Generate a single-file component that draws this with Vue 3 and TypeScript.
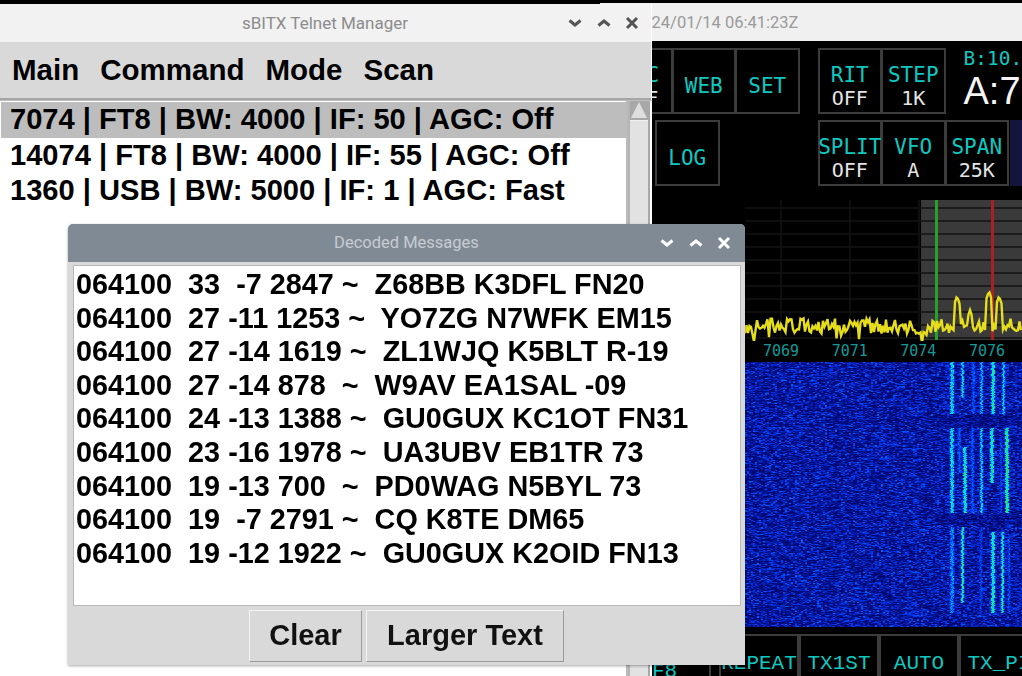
<template>
  <div class="desktop">
    <!-- radio app behind the two dialogs -->
    <section class="radio">
      <header class="radio-title">2024/01/14 06:41:23Z</header>
      <div class="radio-row row-one">
        <div class="btn-group">
          <div class="btn"><span class="lab">AGC</span><span class="val">OFF</span></div>
          <div class="btn"><span class="lab">WEB</span></div>
          <div class="btn"><span class="lab">SET</span></div>
        </div>
        <div class="btn-group">
          <div class="btn"><span class="lab">RIT</span><span class="val">OFF</span></div>
          <div class="btn"><span class="lab">STEP</span><span class="val">1K</span></div>
        </div>
        <div class="freq">
          <div class="freq-b">B:10.</div>
          <div class="freq-a">A:7</div>
        </div>
      </div>
      <div class="radio-row row-two">
        <div class="btn"><span class="lab">LOG</span></div>
        <div class="btn-group">
          <div class="btn"><span class="lab">SPLIT</span><span class="val">OFF</span></div>
          <div class="btn"><span class="lab">VFO</span><span class="val">A</span></div>
          <div class="btn"><span class="lab">SPAN</span><span class="val">25K</span></div>
        </div>
        <div class="navy"></div>
      </div>
      <div class="scope">
        <svg class="spectrum" width="277" height="141" viewBox="0 0 277 141">
          <rect x="176" y="0" width="101" height="140" fill="#3a3a3a" />
          <line v-for="y in gridY" :key="y" x1="0" x2="277" :y1="y" :y2="y" class="grid" />
          <line v-for="x in gridX" :key="x" :x1="x" :x2="x" y1="0" y2="140" class="grid" />
          <rect x="190" y="0" width="3" height="140" fill="#27a227" />
          <rect x="246" y="0" width="3" height="140" fill="#a82020" />
          <polyline :points="trace" class="trace" />
        </svg>
        <div class="scale">
          <span v-for="f in scale" :key="f">{{ f }}</span>
        </div>
        <canvas ref="fall" class="waterfall" width="277" height="265"></canvas>
      </div>
      <div class="radio-bottom">
        <div class="bot first"><span>F8</span></div>
        <div class="bot"><span>REPEAT</span></div>
        <div class="bot"><span>TX1ST</span></div>
        <div class="bot"><span>AUTO</span></div>
        <div class="bot"><span>TX_PI</span></div>
      </div>
    </section>

    <!-- telnet manager -->
    <section class="win telnet">
      <header class="titlebar light">
        <span class="title">sBITX Telnet Manager</span>
        <span class="controls">
          <svg width="14" height="14" viewBox="0 0 14 14"><path d="M1.500 4.500 7 9 12.500 4.500" /></svg>
          <svg width="14" height="14" viewBox="0 0 14 14"><path d="M1.500 9.500 7 5l5.500 4.500" /></svg>
          <svg width="14" height="14" viewBox="0 0 14 14"><path d="M2 2l10 10M12 2 2 12" /></svg>
        </span>
      </header>
      <nav class="menu">
        <span v-for="m in menu" :key="m">{{ m }}</span>
      </nav>
      <div class="list-wrap">
        <ul class="list">
          <li v-for="(s, i) in stations" :key="s" :class="{ sel: i === 0 }">{{ s }}</li>
        </ul>
        <div class="scrollbar">
          <div class="arrow"><svg width="18" height="18" viewBox="0 0 18 18"><path d="M9 1 17 17H1z" /></svg></div>
          <div class="thumb"></div>
        </div>
      </div>
    </section>

    <!-- decoded messages -->
    <section class="win decoded">
      <header class="titlebar dark">
        <span class="title">Decoded Messages</span>
        <span class="controls">
          <svg width="14" height="14" viewBox="0 0 14 14"><path d="M1.500 4.500 7 9 12.500 4.500" /></svg>
          <svg width="14" height="14" viewBox="0 0 14 14"><path d="M1.500 9.500 7 5l5.500 4.500" /></svg>
          <svg width="14" height="14" viewBox="0 0 14 14"><path d="M2 2l10 10M12 2 2 12" /></svg>
        </span>
      </header>
      <div class="messages">
        <div v-for="m in messages" :key="m" class="msg">{{ m }}</div>
      </div>
      <footer class="actions">
        <button class="clear">Clear</button>
        <button class="larger">Larger Text</button>
      </footer>
    </section>
  </div>
</template>

<script setup lang="ts">
import { onMounted, ref } from 'vue';

const menu = ['Main', 'Command', 'Mode', 'Scan'];
const stations = [
  '7074 | FT8 | BW: 4000 | IF: 50 | AGC: Off',
  '14074 | FT8 | BW: 4000 | IF: 55 | AGC: Off',
  '1360 | USB | BW: 5000 | IF: 1 | AGC: Fast',
];
const messages = [
  '064100  33  -7 2847 ~  Z68BB K3DFL FN20',
  '064100  27 -11 1253 ~  YO7ZG N7WFK EM15',
  '064100  27 -14 1619 ~  ZL1WJQ K5BLT R-19',
  '064100  27 -14 878  ~  W9AV EA1SAL -09',
  '064100  24 -13 1388 ~  GU0GUX KC1OT FN31',
  '064100  23 -16 1978 ~  UA3UBV EB1TR 73',
  '064100  19 -13 700  ~  PD0WAG N5BYL 73',
  '064100  19  -7 2791 ~  CQ K8TE DM65',
  '064100  19 -12 1922 ~  GU0GUX K2OID FN13',
];
const scale = ['7069', '7071', '7074', '7076'];

const gridY = Array.from({ length: 11 }, (_, i) => 8 + i * 13);
const gridX = [36, 105, 174];

// small seeded generator so the noise is the same on every load
let seed = 7074;
const rnd = () => {
  seed = (seed * 1664525 + 1013904223) % 4294967296;
  return seed / 4294967296;
};

// peaks of the spectrum: x offset, height above the noise floor
const peaks: [number, number][] = [[212, 30], [225, 16], [244, 35], [254, 30]];
const buildTrace = () => {
  const pts: string[] = [];
  for (let x = 0; x <= 277; x += 1.5) {
    let y = 126 + (rnd() - 0.5) * 15;
    if (x < 12 && x > 6) y += 9;
    if (x > 170 && x < 178) y += 10;
    if (rnd() > 0.93) y += 6;
    for (const [px, h] of peaks) {
      const d = Math.abs(x - px);
      if (d < 3) y = 126 - h + d * 3;
    }
    pts.push(`${x},${y.toFixed(1)}`);
  }
  return pts.join(' ');
};
const trace = buildTrace();

const fall = ref<HTMLCanvasElement | null>(null);

// x offset, width, first and last row, strength
const streaks: [number, number, number, number, number][] = [
  [205, 3, 0, 51, 0.72], [216, 2, 0, 35, 0.72], [227, 2, 0, 51, 0.46], [235, 2, 0, 51, 0.62], [246, 3, 0, 51, 0.8], [257, 2, 0, 51, 0.68],
  [205, 3, 66, 150, 0.72], [213, 2, 66, 110, 0.46], [218, 3, 85, 150, 0.78], [226, 2, 66, 150, 0.46], [235, 2, 66, 150, 0.7], [245, 3, 66, 120, 0.8], [255, 1, 75, 150, 0.44], [260, 3, 66, 150, 0.88],
  [205, 3, 165, 250, 0.55], [216, 2, 165, 240, 0.85], [235, 1, 165, 250, 0.42], [246, 3, 170, 250, 0.8], [256, 2, 170, 250, 0.8], [263, 1, 172, 250, 0.46],
];

// maps 0..1 to the blue, cyan, green, yellow ramp of the waterfall
const ramp = (v: number): [number, number, number] => {
  if (v < 0.35) return [0, v * 170, 90 + v * 480];
  if (v < 0.6) return [0, 60 + (v - 0.35) * 680, 250];
  if (v < 0.85) return [(v - 0.6) * 200, 230, 240 - (v - 0.6) * 800];
  return [(v - 0.85) * 1500, 235, 40];
};

onMounted(() => {
  const ctx = fall.value?.getContext('2d');
  if (!ctx) return;
  const w = 277;
  const h = 265;
  const img = ctx.createImageData(w, h);
  // coarse noise, two pixels wide, so that it reads as speckle after the blur
  const noise = Array.from({ length: w * h + 2 }, () => rnd());
  for (let y = 0; y < h; y++) {
    const jitter = Math.floor(rnd() * 2);
    for (let x = 0; x < w; x++) {
      const n = noise[y * w + (x - (x % 2))];
      let v = 0.03 + n * n * 0.38;
      if (x > 190 && ((y > 52 && y < 64) || (y > 152 && y < 163))) v *= 0.75;
      for (const [sx, sw, y0, y1, s] of streaks) {
        if (y < y0 || y > y1) continue;
        const sx2 = sx + jitter;
        if (x >= sx2 && x < sx2 + sw) {
          v = Math.max(v, s * (0.6 + rnd() * 0.4));
        } else if (x >= sx2 - 1 && x < sx2 + sw + 1) {
          v = Math.max(v, s * 0.3 + rnd() * 0.15);
        }
      }
      const [r, g, b] = ramp(v);
      const i = (y * w + x) * 4;
      img.data[i] = r;
      img.data[i + 1] = g;
      img.data[i + 2] = b;
      img.data[i + 3] = 255;
    }
  }
  ctx.putImageData(img, 0, 0);
});
</script>

<style>
html, body { margin: 0; background: #000; overflow: hidden; }
</style>

<style scoped>
.desktop {
  position: relative;
  width: 1022px;
  height: 676px;
  overflow: hidden;
  background: #000;
  font-family: "Liberation Sans", Arial, sans-serif;
}

.radio {
  position: absolute;
  left: 600px;
  top: 3px;
  width: 422px;
  height: 673px;
  background: #000;
  overflow: hidden;
}
.radio-title {
  height: 38px;
  background: #f0f0f0;
  color: #9a9a9a;
  font: 16.500px/40px Roboto, sans-serif;
  padding-left: 33px;
}
.radio-row { display: flex; }
.row-one { margin-top: 7px; padding-left: 8px; gap: 19px; height: 66px; }
.row-two { margin-top: 6px; padding-left: 55px; gap: 99px; height: 66px; }
.btn-group { display: flex; }
.btn {
  box-sizing: border-box;
  width: 64.500px;
  height: 66px;
  padding-top: 11px;
  border: 2px solid #3c3c3c;
  display: flex;
  flex-direction: column;
  align-items: center;
  justify-content: center;
  font: 21px/23px "DejaVu Sans Mono", monospace;
  margin-right: -1px;
}
.lab { color: #10c8c0; }
.val { color: #e4e4e4; font-size: 20px; }
.freq { margin-left: 0; }
.freq-b { color: #10c8c0; font: 19.500px/22px "DejaVu Sans Mono", monospace; }
.freq-a { color: #f4f4f4; font: 38px/42px "Liberation Sans", sans-serif; }
.navy { width: 12px; height: 66px; background: #14143c; margin-left: -99px; position: relative; left: 2px; }

.scope {
  margin-top: 14px;
  margin-left: 145px;
  width: 277px;
}
.spectrum { display: block; }
.grid { stroke: #131313; stroke-width: 1.500; }
.trace { fill: none; stroke: #e6de1c; stroke-width: 2.400; filter: blur(0.3px); }
.scale {
  height: 21px;
  display: flex;
  gap: 32.500px;
  padding-left: 18px;
  color: #129a98;
  font: 15px/21px "DejaVu Sans Mono", monospace;
}
.waterfall { display: block; filter: blur(0.5px); }
.radio-bottom {
  display: flex;
  margin-top: 7px;
  margin-left: 31px;
  height: 60px;
}
.bot {
  box-sizing: border-box;
  flex: 0 0 80px;
  border: 2px solid #3c3c3c;
  color: #10c8c0;
  font: 21px/1 "Liberation Mono", monospace;
  text-align: center;
  padding-top: 17px;
  white-space: nowrap;
}
.bot.first { text-align: left; padding-left: 19px; padding-top: 25px; margin-right: 8px; }

.win {
  position: absolute;
  box-sizing: border-box;
  background: #d9d9d9;
}
.telnet {
  left: 0;
  top: 4px;
  width: 652px;
  height: 672px;
  background: #fff;
}
.decoded {
  left: 68px;
  top: 224px;
  width: 677px;
  height: 441px;
  border-radius: 5px 5px 0 0;
  box-shadow: 0 1px 3px rgba(0, 0, 0, 0.35);
  display: flex;
  flex-direction: column;
}
.titlebar {
  position: relative;
  height: 38px;
  display: flex;
  align-items: center;
  justify-content: center;
  font: 17px/38px Roboto, sans-serif;
}
.titlebar.light { background: #f2f2f2; color: #8c8c8c; margin-right: 1px; padding-right: 1px; }
.titlebar.dark { background: #808a94; color: #c6ccd2; border-radius: 5px 5px 0 0; font-size: 16.500px; }
.controls {
  position: absolute;
  top: 12px;
  display: flex;
  gap: 14.500px;
}
.light .controls { right: 12px; }
.dark .controls { right: 14px; }
.controls svg { display: block; }
.controls path { fill: none; stroke-width: 3; }
.light .controls path { stroke: #555; }
.dark .controls path { stroke: #fff; }

.menu {
  height: 56px;
  margin-right: 1px;
  background: #d9d9d9;
  border-bottom: 2px solid #a6a6a6;
  display: flex;
  align-items: center;
  gap: 21px;
  padding-left: 12px;
  font: bold 29.500px/1 "Liberation Sans", sans-serif;
  color: #000;
}
.list-wrap { display: flex; border-top: 1px solid #bdbdbd; height: 576px; }
.list {
  list-style: none;
  margin: 0;
  padding: 1px 0 0 1px;
  flex: 1;
  font: bold 29.100px/35.500px "Liberation Sans", sans-serif;
  color: #000;
  border-right: 2px solid #bbb;
}
.list li { padding-left: 9px; white-space: nowrap; }
.list li.sel { background: #bdbdbd; }
.scrollbar {
  box-sizing: border-box;
  flex: 0 0 22px;
  margin-right: 2px;
  background: #dcdcdc;
  border-left: 2px solid #b4b4b4;
  border-right: 2px solid #a8a8a8;
  display: flex;
  flex-direction: column;
}
.arrow { height: 19px; background: #a8a8a8; }
.arrow svg { display: block; }
.arrow path { fill: #dedede; }
.thumb { flex: 1; background: #e2e2e2; border-top: 1px solid #f2f2f2; }

.messages {
  box-sizing: border-box;
  margin: 3px 4px 0 5px;
  height: 341px;
  background: #fff;
  border: 1px solid #b8b8b8;
  padding: 2px 0 0 2px;
  font: bold 28.800px/33.600px "Liberation Sans", sans-serif;
  color: #000;
}
.msg { white-space: pre; }
.actions {
  flex: 1;
  display: flex;
  justify-content: center;
  align-items: center;
  gap: 4px;
}
.actions button {
  box-sizing: border-box;
  height: 52px;
  background: #d9d9d9;
  border: 1px solid #9a9a9a;
  border-top-color: #f4f4f4;
  border-left-color: #f4f4f4;
  font: bold 29px/1 "Liberation Sans", sans-serif;
  color: #111;
  padding: 0;
}
.clear { width: 113px; }
.larger { width: 198px; }
</style>
